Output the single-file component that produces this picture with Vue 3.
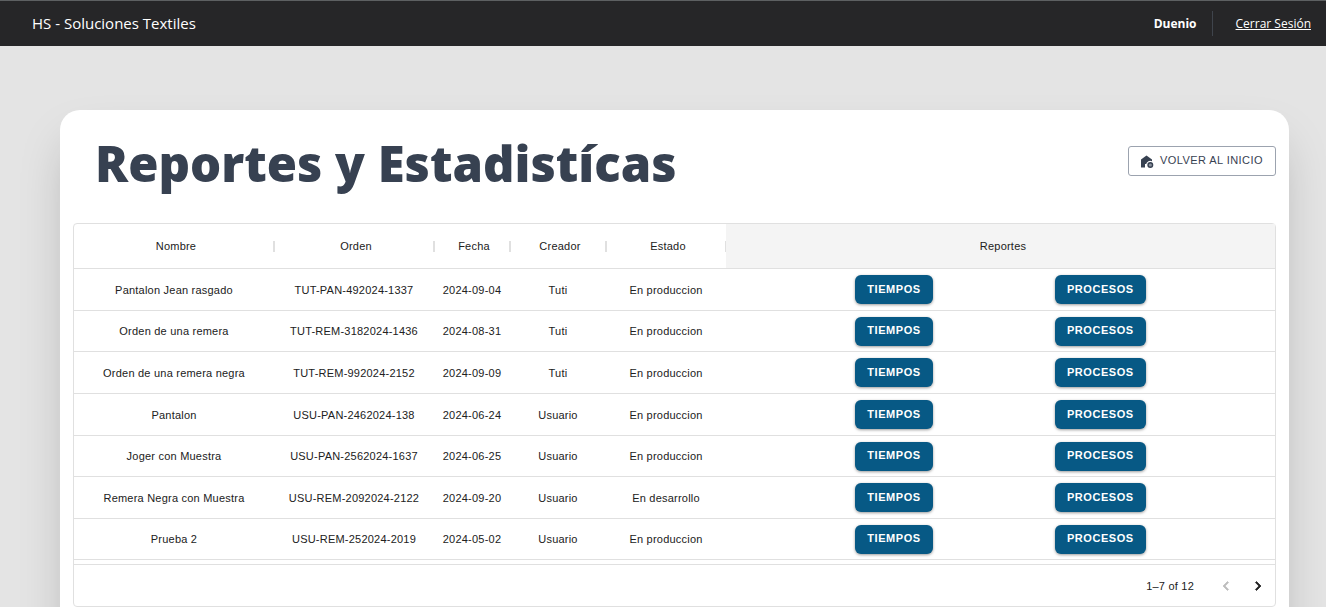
<script setup>
const columns = [
  { label: 'Nombre', cls: 'c-nombre' },
  { label: 'Orden', cls: 'c-orden' },
  { label: 'Fecha', cls: 'c-fecha' },
  { label: 'Creador', cls: 'c-creador' },
  { label: 'Estado', cls: 'c-estado' },
]

const rows = [
  ['Pantalon Jean rasgado', 'TUT-PAN-492024-1337', '2024-09-04', 'Tuti', 'En produccion'],
  ['Orden de una remera', 'TUT-REM-3182024-1436', '2024-08-31', 'Tuti', 'En produccion'],
  ['Orden de una remera negra', 'TUT-REM-992024-2152', '2024-09-09', 'Tuti', 'En produccion'],
  ['Pantalon', 'USU-PAN-2462024-138', '2024-06-24', 'Usuario', 'En produccion'],
  ['Joger con Muestra', 'USU-PAN-2562024-1637', '2024-06-25', 'Usuario', 'En produccion'],
  ['Remera Negra con Muestra', 'USU-REM-2092024-2122', '2024-09-20', 'Usuario', 'En desarrollo'],
  ['Prueba 2', 'USU-REM-252024-2019', '2024-05-02', 'Usuario', 'En produccion'],
]
</script>

<template>
  <div class="page">
    <header class="navbar">
      <span class="brand">HS - Soluciones Textiles</span>
      <nav class="account">
        <strong class="role">Duenio</strong>
        <a class="logout" href="#">Cerrar Sesión</a>
      </nav>
    </header>

    <main class="card">
      <div class="card-head">
        <h1>Reportes y Estadistícas</h1>
        <button type="button" class="back">
          <svg class="back-icon" viewBox="0 0 14 14" aria-hidden="true">
            <path d="M1 13.500V5.500L6.500 1.500 12 5.500V7.200A4 4 0 0 0 6.200 10H5v3.500z" fill="currentColor" />
            <circle cx="10.300" cy="11" r="2.300" fill="#8a919d" stroke="currentColor" stroke-width="1.400" />
          </svg>
          <span class="back-label">Volver al inicio</span>
        </button>
      </div>

      <section class="grid">
        <table>
          <colgroup>
            <col v-for="c in columns" :key="c.cls" :class="c.cls" />
            <col />
          </colgroup>
          <thead>
            <tr>
              <th v-for="c in columns" :key="c.cls" scope="col">
                <div class="th-in">{{ c.label }}</div>
              </th>
              <th scope="col" class="reports">Reportes</th>
            </tr>
          </thead>
          <tbody>
            <tr v-for="row in rows" :key="row[1]">
              <td v-for="(cell, i) in row" :key="i">{{ cell }}</td>
              <td class="actions">
                <div class="buttons">
                  <button type="button" class="btn">Tiempos</button>
                  <button type="button" class="btn">Procesos</button>
                </div>
              </td>
            </tr>
          </tbody>
        </table>
        <footer class="pager">
          <span class="range">1–7 of 12</span>
          <button type="button" class="arrow" disabled aria-label="Página anterior">
            <svg viewBox="0 0 24 24" aria-hidden="true"><path d="M15.410 16.590 10.830 12l4.580-4.590L14 6l-6 6 6 6z" fill="currentColor" stroke="currentColor" /></svg>
          </button>
          <button type="button" class="arrow" aria-label="Página siguiente">
            <svg viewBox="0 0 24 24" aria-hidden="true"><path d="M8.590 16.590 13.170 12 8.590 7.410 10 6l6 6-6 6z" fill="currentColor" stroke="currentColor" /></svg>
          </button>
        </footer>
      </section>
    </main>
  </div>
</template>

<style>
body {
  margin: 0;
  background: #e4e4e4;
}
</style>

<style scoped>
.page {
  display: flex;
  flex-direction: column;
  height: 100vh;
  overflow: hidden;
  background: #e4e4e4;
  font-family: "Liberation Sans", Arial, sans-serif;
}

.navbar {
  display: flex;
  flex: none;
  align-items: center;
  justify-content: space-between;
  box-sizing: border-box;
  height: 46px;
  padding: 0 15px 0 32px;
  border-top: 1px solid #5d6062;
  background: #262628;
  color: #fff;
  font-family: "Open Sans", "Noto Sans", sans-serif;
}

.brand {
  padding-bottom: 2px;
  font-size: 15px;
}

.account {
  display: flex;
  align-items: center;
  font-size: 12px;
}

.role {
  padding-right: 15px;
  border-right: 1px solid #3f444c;
  line-height: 25px;
}

.logout {
  margin-left: 23px;
  color: #fff;
}

.card {
  flex: none;
  margin: 64px 37px 0 60px;
  padding: 24px 13px 48px;
  border-radius: 20px;
  background: #fff;
  box-shadow: 0 25px 50px -12px rgba(0, 0, 0, 0.25);
}

.card-head {
  display: flex;
  align-items: center;
  justify-content: space-between;
  height: 89px;
}

h1 {
  margin: 0 0 32px 22px;
  color: #374151;
  font-family: "Open Sans", "Noto Sans", sans-serif;
  font-size: 49px;
  font-weight: 900;
  line-height: 60px;
  white-space: nowrap;
}

.back {
  display: flex;
  align-items: center;
  gap: 6px;
  height: 30px;
  margin-bottom: 36px;
  padding: 0 12px 0 11px;
  border: 1px solid #9ca3af;
  border-radius: 3px;
  background: #fff;
  color: #374151;
  font: 11px "Liberation Sans", Arial, sans-serif;
  letter-spacing: 0.04em;
  text-transform: uppercase;
}

.back-label {
  padding-bottom: 2px;
}

.back-icon {
  width: 14px;
  height: 14px;
}

.grid {
  border: 1px solid #e0e0e0;
  border-radius: 4px;
  color: #212121;
  font-size: 11px;
  letter-spacing: 0.02em;
}

table {
  width: 100%;
  border-collapse: separate;
  border-spacing: 0;
  table-layout: fixed;
}

.c-nombre { width: 200px; }
.c-orden { width: 160px; }
.c-fecha { width: 76px; }
.c-creador { width: 96px; }
.c-estado { width: 120px; }

th,
td {
  box-sizing: border-box;
  padding: 0;
  border-bottom: 1px solid #e0e0e0;
  text-align: center;
  white-space: nowrap;
}

th {
  height: 45px;
  font-weight: 400;
}

.th-in {
  margin-right: -1px;
  padding-left: 5px;
  border-right: 2px solid #e0e0e0;
  line-height: 11px;
}

.reports {
  padding-left: 5px;
  background: #f4f4f4;
}

td {
  height: 42px;
}

tbody tr:nth-child(2) td,
tbody tr:nth-child(5) td,
tbody tr:nth-child(7) td {
  height: 41px;
}

.buttons {
  display: flex;
  justify-content: space-evenly;
  padding: 0 7px;
}

.btn {
  height: 29px;
  padding: 0 12px 2px;
  border: 0;
  border-radius: 6px;
  background: #075985;
  box-shadow: 0 1px 3px rgba(0, 0, 0, 0.4);
  color: #fff;
  font: bold 11px "Liberation Sans", Arial, sans-serif;
  letter-spacing: 0.05em;
  text-transform: uppercase;
}

.pager {
  display: flex;
  align-items: center;
  justify-content: flex-end;
  height: 41px;
  margin-top: 4px;
  padding-right: 1px;
  border-top: 1px solid #e0e0e0;
}

.range {
  margin-right: 16px;
}

.arrow {
  display: flex;
  align-items: center;
  justify-content: center;
  width: 32px;
  height: 32px;
  padding: 0;
  border: 0;
  background: none;
  color: #212121;
}

.arrow:disabled {
  color: #bdbdbd;
}

.arrow svg {
  width: 18px;
  height: 18px;
}
</style>
